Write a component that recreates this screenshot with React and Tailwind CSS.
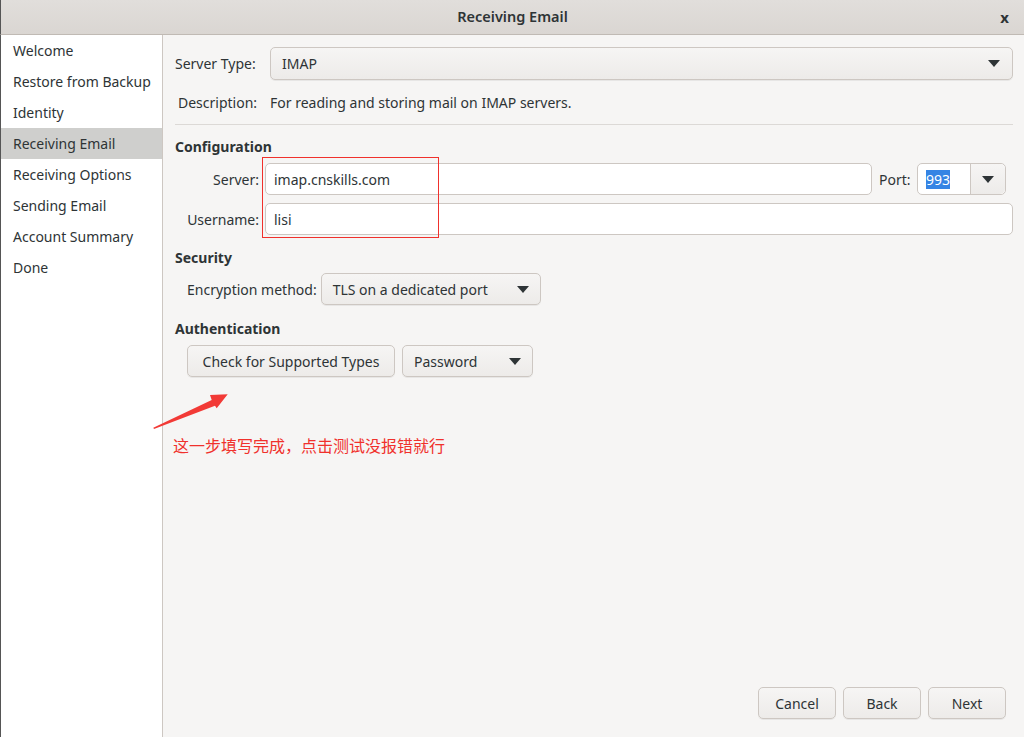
import React from "react";

const Caret = () => (
  <svg width="12" height="7" viewBox="0 0 12 7"><path d="M0 0h12L6 7z" fill="#2e3436" /></svg>
);

function Combo({ className = "", children }) {
  return (
    <div className={"flex items-center justify-between rounded-[5px] border border-[#cdc7c2] bg-gradient-to-b from-[#f6f5f4] to-[#edebe9] shadow-[0_1px_0_rgba(0,0,0,0.06)] " + className}>
      {children}
    </div>
  );
}

export default function App() {
  const items = ["Welcome", "Restore from Backup", "Identity", "Receiving Email", "Receiving Options", "Sending Email", "Account Summary", "Done"];
  return (
    <div className="w-[1024px] h-[737px] flex flex-col bg-[#f6f5f4] text-[#2e3436] text-[14px] overflow-hidden relative" style={{ fontFamily: '"Noto Sans", "Noto Sans CJK SC", sans-serif' }}>
      <div className="h-[35px] shrink-0 flex items-center justify-center relative bg-gradient-to-b from-[#e1dedb] to-[#dad6d2] border-b border-[#c0bab4] border-l border-l-[#555]">
        <span className="font-semibold text-[14.5px] text-[#2e3436]">Receiving Email</span>
        <span className="absolute right-[15px] top-[6px] text-[15px] font-bold text-[#2e3436]">x</span>
      </div>
      <div className="flex flex-1">
        <div className="w-[163px] shrink-0 bg-white border-r border-[#cdc7c2] border-l border-l-[#555]">
          {items.map((t) => (
            <div key={t} className={"h-[31px] flex items-center pl-[12px] " + (t === "Receiving Email" ? "bg-[#cfcfcd]" : "")}>{t}</div>
          ))}
        </div>
        <div className="flex-1 flex flex-col pl-[12px] pr-[11px] relative">
          <div className="flex items-center mt-[12px]">
            <span className="w-[95px]">Server Type:</span>
            <Combo className="flex-1 h-[33px] pl-[11px] pr-[12px]">
              <span>IMAP</span>
              <Caret />
            </Combo>
          </div>
          <div className="flex items-center mt-[11px] h-[22px] pl-[3px]">
            <span className="w-[92px]">Description:</span>
            <span>For reading and storing mail on IMAP servers.</span>
          </div>
          <div className="h-px bg-[#dcd9d6] mt-[11px]" />
          <div className="font-bold mt-[11px] h-[20px] flex items-center">Configuration</div>
          <div className="flex items-center mt-[7px] h-[32px]">
            <span className="w-[90px] text-right pr-[6px] text-[#2e3436]">Server:</span>
            <div className="w-[607px] h-[32px] rounded-[5px] border border-[#cdc7c2] bg-white flex items-center pl-[8px]">imap.cnskills.com</div>
            <span className="ml-[7px] w-[38px]">Port:</span>
            <div className="w-[89px] h-[32px] rounded-[5px] border border-[#cdc7c2] bg-white flex">
              <div className="flex-1 flex items-center pl-[8px]"><span className="bg-[#3584e4] text-white leading-[19px]">993</span></div>
              <div className="w-[35px] border-l border-[#cdc7c2] bg-gradient-to-b from-[#f6f5f4] to-[#edebe9] rounded-r-[5px] flex items-center justify-center"><Caret /></div>
            </div>
          </div>
          <div className="flex items-center mt-[8px] h-[32px]">
            <span className="w-[90px] text-right pr-[6px]">Username:</span>
            <div className="flex-1 h-[32px] rounded-[5px] border border-[#cdc7c2] bg-white flex items-center pl-[8px]">lisi</div>
          </div>
          <div className="font-bold mt-[12px] h-[20px] flex items-center">Security</div>
          <div className="flex items-center mt-[6px] pl-[12px]">
            <span className="mr-[4px]">Encryption method:</span>
            <Combo className="w-[220px] h-[32px] pl-[11px] pr-[11px]">
              <span>TLS on a dedicated port</span>
              <Caret />
            </Combo>
          </div>
          <div className="font-bold mt-[13px] h-[20px] flex items-center">Authentication</div>
          <div className="flex items-center mt-[7px] pl-[12px] gap-[7px]">
            <Combo className="w-[208px] h-[32px] justify-center">
              <span>Check for Supported Types</span>
            </Combo>
            <Combo className="w-[131px] h-[32px] pl-[11px] pr-[11px]">
              <span>Password</span>
              <Caret />
            </Combo>
          </div>
          <div className="mt-[56px] h-[24px] flex items-center text-[#f0312c] text-[16px] -ml-[2px]" style={{ fontFamily: '"Noto Sans CJK SC", sans-serif' }}>这一步填写完成，点击测试没报错就行</div>
          <div className="flex-1" />
          <div className="flex justify-end gap-[7px] mb-[18px] pr-[7px]">
            {["Cancel", "Back", "Next"].map((b) => (
              <Combo key={b} className="w-[78px] h-[32px] justify-center"><span>{b}</span></Combo>
            ))}
          </div>
        </div>
      </div>
      <div className="absolute left-[262px] top-[157px] w-[177px] h-[81px] border border-[#f0312c] pointer-events-none" />
      <svg className="absolute left-[150px] top-[388px] pointer-events-none" width="85" height="45" viewBox="0 0 85 45">
        <path d="M3.3 39.7 L61.7 12 L60 7 L77.7 6.3 L66.7 20.3 L65 17.7 L4 41 Z" fill="#f23a36" />
      </svg>
    </div>
  );
}
